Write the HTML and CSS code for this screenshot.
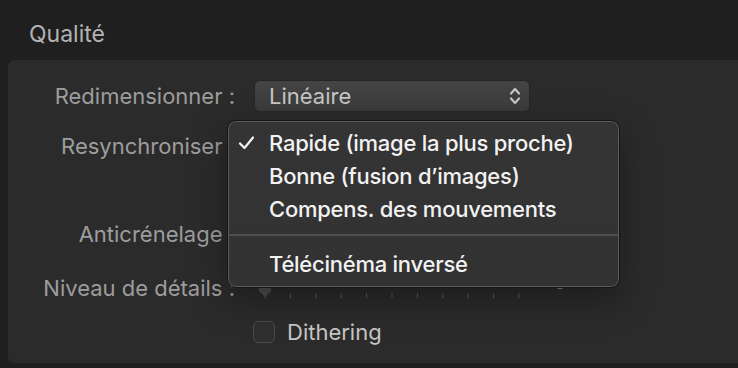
FILE: index.html
```html
<!DOCTYPE html>
<html lang="fr">
<head>
  <meta charset="UTF-8" />
  <meta name="viewport" content="width=device-width, initial-scale=1.0" />
  <title>Qualité</title>
  <link rel="stylesheet" href="styles.css">
</head>
<body>
  <h2 class="section-title">Qualité</h2>

  <div class="panel">
    <div class="form-grid">
      <div class="label">Redimensionner :</div>
      <div class="control">
        <div class="select">
          <span>Linéaire</span>
          <svg class="chevrons" width="14" height="20" viewBox="0 0 14 20">
            <path d="M3 7.5 L7 3 L11 7.5" fill="none" stroke="#c4c4c4" stroke-width="2.2" stroke-linecap="round" stroke-linejoin="round"/>
            <path d="M3 12.5 L7 17 L11 12.5" fill="none" stroke="#c4c4c4" stroke-width="2.2" stroke-linecap="round" stroke-linejoin="round"/>
          </svg>
        </div>
      </div>

      <div class="label">Resynchroniser :</div>
      <div class="control"></div>

      <div class="label"></div>
      <div class="control"></div>

      <div class="label">Anticrénelage :</div>
      <div class="control"></div>

      <div class="label">Niveau de détails :</div>
      <div class="control slider-cell">
        <svg class="slider" width="330" height="56" viewBox="0 0 330 56">
          <rect x="8" y="22" width="298" height="3" rx="1.5" fill="#444"/>
          <g fill="#5c5c5c">
            <rect x="10.5" y="33" width="1" height="5"/>
            <rect x="35.9" y="33" width="1" height="5"/>
            <rect x="61.3" y="33" width="1" height="5"/>
            <rect x="86.7" y="33" width="1" height="5"/>
            <rect x="112.1" y="33" width="1" height="5"/>
            <rect x="137.5" y="33" width="1" height="5"/>
            <rect x="162.9" y="33" width="1" height="5"/>
            <rect x="188.3" y="33" width="1" height="5"/>
            <rect x="213.7" y="33" width="1" height="5"/>
            <rect x="239.1" y="33" width="1" height="5"/>
            <rect x="264.5" y="33" width="1" height="5"/>
          </g>
          <path d="M5 14 L17 14 L17 31 L11 37 L5 31 Z" fill="#4e4e4e"/>
          <circle cx="306" cy="23" r="5" fill="none" stroke="#9a9a9a" stroke-width="2"/>
        </svg>
      </div>

      <div class="label"></div>
      <div class="control">
        <label class="check">
          <span class="check-box"></span>
          <span>Dithering</span>
        </label>
      </div>
    </div>

    <div class="menu">
      <div class="menu-item selected">
        <span class="tick">
          <svg width="17" height="14" viewBox="0 0 17 14">
            <path d="M2 7.5 L6.5 12 L15 1.5" fill="none" stroke="#f2f2f2" stroke-width="2.2" stroke-linecap="round" stroke-linejoin="round"/>
          </svg>
        </span>
        Rapide (image la plus proche)
      </div>
      <div class="menu-item"><span class="tick"></span>Bonne (fusion d’images)</div>
      <div class="menu-item"><span class="tick"></span>Compens. des mouvements</div>
      <div class="menu-sep"></div>
      <div class="menu-item"><span class="tick"></span>Télécinéma inversé</div>
    </div>
  </div>
</body>
</html>
```

FILE: styles.css
```css
html, body {
  height: 100%;
}
body {
  margin: 0;
  font-family: Inter, "Noto Sans", sans-serif;
  background: #1f1f1f;
  color: #a0a0a0;
  overflow: hidden;
  padding: 22px 0 0 8px;
  box-sizing: border-box;
}
.section-title {
  margin: 0 0 14px 21px;
  font-size: 23px;
  font-weight: 400;
  line-height: 24px;
  color: #b3b3b3;
}
.panel {
  position: relative;
  background: #2b2b2b;
  border-radius: 7px 0 0 7px;
  margin-right: -20px;
  height: 303px;
  padding-top: 12px;
  box-sizing: border-box;
}
.form-grid {
  display: grid;
  grid-template-columns: 227px 1fr;
  grid-template-rows: 48px 52px 36px 52px 56px 32px;
  column-gap: 19px;
  align-items: center;
}
.label {
  text-align: right;
  font-size: 22px;
  color: #9d9d9d;
  white-space: nowrap;
}
.select {
  width: 276px;
  height: 32px;
  box-sizing: border-box;
  border-radius: 6px;
  background: linear-gradient(to bottom, #444, #3b3b3b);
  border: 1px solid #262626;
  display: flex;
  align-items: center;
  justify-content: space-between;
  padding: 0 7px 0 14px;
  font-size: 22px;
  color: #c6c6c6;
}
.chevrons {
  display: block;
}
.slider-cell {
  align-self: start;
}
.slider {
  display: block;
}
.check {
  display: flex;
  align-items: center;
  gap: 12px;
  margin-left: -1px;
  font-size: 22px;
  color: #c6c6c6;
}
.check-box {
  width: 22px;
  height: 22px;
  box-sizing: border-box;
  border-radius: 5px;
  border: 1px solid #4a4a4a;
  background: #2f2f2f;
}
.menu {
  position: absolute;
  left: 219px;
  top: 60px;
  width: 393px;
  height: 168px;
  box-sizing: border-box;
  padding-top: 5px;
  border-radius: 9px;
  background: linear-gradient(to bottom, #343434, #323232);
  border: 1px solid #161616;
  box-shadow: inset 0 0 0 1px #5a5a5a, 0 12px 36px rgba(0, 0, 0, 0.35);
  z-index: 10;
}
.menu-item {
  display: flex;
  align-items: center;
  height: 33px;
  font-size: 22px;
  font-weight: 500;
  letter-spacing: -0.25px;
  color: #f2f2f2;
  white-space: nowrap;
}
.tick {
  width: 41px;
  padding-left: 10px;
  box-sizing: border-box;
  display: flex;
  align-items: center;
}
.menu-sep {
  height: 2px;
  background: #4e4e4e;
  margin: 9px 1px 11px;
}
```
